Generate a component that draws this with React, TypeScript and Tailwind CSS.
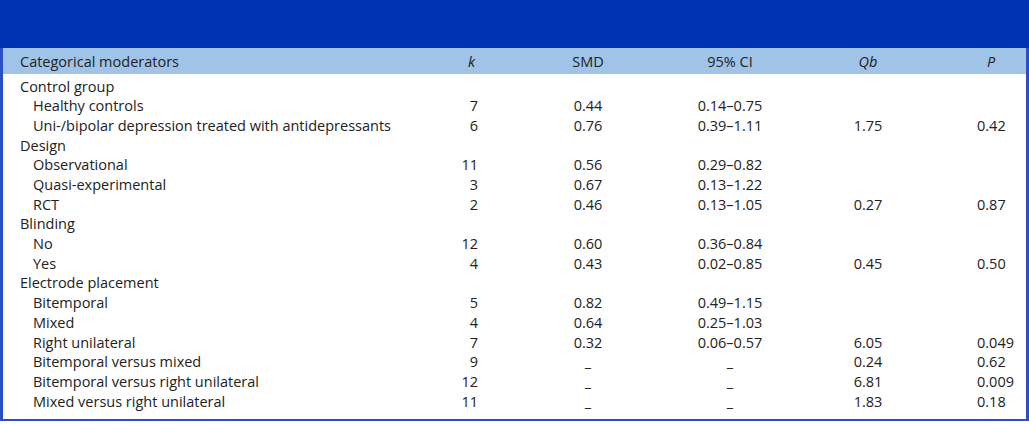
import React from "react";

type Row = { label: string; indent?: boolean; k?: string; smd?: string; ci?: string; qb?: string; p?: string };

const rows: Row[] = [
  { label: "Control group" },
  { label: "Healthy controls", indent: true, k: "7", smd: "0.44", ci: "0.14–0.75" },
  { label: "Uni-/bipolar depression treated with antidepressants", indent: true, k: "6", smd: "0.76", ci: "0.39–1.11", qb: "1.75", p: "0.42" },
  { label: "Design" },
  { label: "Observational", indent: true, k: "11", smd: "0.56", ci: "0.29–0.82" },
  { label: "Quasi-experimental", indent: true, k: "3", smd: "0.67", ci: "0.13–1.22" },
  { label: "RCT", indent: true, k: "2", smd: "0.46", ci: "0.13–1.05", qb: "0.27", p: "0.87" },
  { label: "Blinding" },
  { label: "No", indent: true, k: "12", smd: "0.60", ci: "0.36–0.84" },
  { label: "Yes", indent: true, k: "4", smd: "0.43", ci: "0.02–0.85", qb: "0.45", p: "0.50" },
  { label: "Electrode placement" },
  { label: "Bitemporal", indent: true, k: "5", smd: "0.82", ci: "0.49–1.15" },
  { label: "Mixed", indent: true, k: "4", smd: "0.64", ci: "0.25–1.03" },
  { label: "Right unilateral", indent: true, k: "7", smd: "0.32", ci: "0.06–0.57", qb: "6.05", p: "0.049" },
  { label: "Bitemporal versus mixed", indent: true, k: "9", smd: "_", ci: "_", qb: "0.24", p: "0.62" },
  { label: "Bitemporal versus right unilateral", indent: true, k: "12", smd: "_", ci: "_", qb: "6.81", p: "0.009" },
  { label: "Mixed versus right unilateral", indent: true, k: "11", smd: "_", ci: "_", qb: "1.83", p: "0.18" },
];

export default function App() {
  return (
    <div
      className="w-[1029px] h-[424px] bg-white text-[#222222] text-[14.5px]"
      style={{ fontFamily: '"Open Sans", "Noto Sans", sans-serif' }}
    >
      <div className="h-[421px] border-l-[3px] border-r-[3px] border-b-[2px] border-[#2a4fc2] flex flex-col">
        <div className="h-[48px] bg-[#0033b3] -mx-[3px]" />
        <div className="h-[26px] bg-[#9fc4e7] flex items-center pl-[17px] pt-[3px] leading-none">
          <div className="w-[420px]">Categorical moderators</div>
          <div className="w-[38px] text-right italic pr-[3px]">k</div>
          <div className="w-[100px] ml-[60px] text-center">SMD</div>
          <div className="w-[100px] ml-[42px] text-center">95% CI</div>
          <div className="w-[100px] ml-[38px] text-center italic">Qb</div>
          <div className="ml-[69px] italic">P</div>
        </div>
        <div className="pt-[3px] flex flex-col">
          {rows.map((r, i) => (
            <div key={i} className="h-[19.7px] flex items-center pl-[17px] leading-none">
              <div className={`w-[420px] ${r.indent ? "pl-[13px]" : ""}`}>{r.label}</div>
              <div className="w-[38px] text-right">{r.k ?? ""}</div>
              <div className="w-[100px] ml-[60px] text-center">{r.smd ?? ""}</div>
              <div className="w-[100px] ml-[42px] text-center">{r.ci ?? ""}</div>
              <div className="w-[100px] ml-[38px] text-center">{r.qb ?? ""}</div>
              <div className="ml-[59px]">{r.p ?? ""}</div>
            </div>
          ))}
        </div>
      </div>
    </div>
  );
}
